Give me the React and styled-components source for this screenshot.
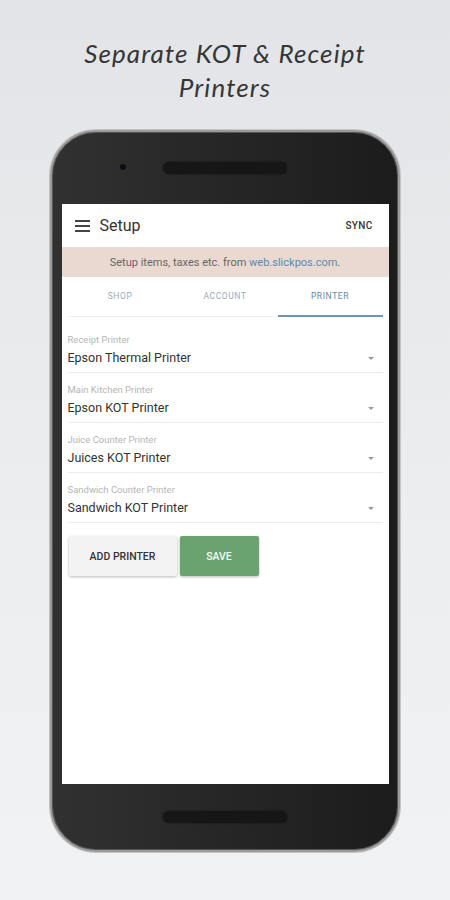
import React from 'react';
import styled, { createGlobalStyle } from 'styled-components';

const GlobalStyle = createGlobalStyle`
  html, body {
    margin: 0;
    padding: 0;
  }
  body {
    background: linear-gradient(180deg, #e2e4e7 0%, #eceef0 60%, #f1f2f4 100%);
    font-family: Roboto, 'Liberation Sans', sans-serif;
    min-height: 900px;
  }
`;

const printers = [
  { label: 'Receipt Printer', value: 'Epson Thermal Printer' },
  { label: 'Main Kitchen Printer', value: 'Epson KOT Printer' },
  { label: 'Juice Counter Printer', value: 'Juices KOT Printer' },
  { label: 'Sandwich Counter Printer', value: 'Sandwich KOT Printer' },
];

const tabs = ['Shop', 'Account', 'Printer'];

const App = () => (
  <>
    <GlobalStyle />
    <Page>
      <Title>
        Separate KOT &amp; Receipt
        <br />
        Printers
      </Title>
      <Phone>
        <TopBezel>
          <Camera />
          <Speaker />
        </TopBezel>
        <Screen>
          <AppBar>
            <Menu>
              <span />
              <span />
              <span />
            </Menu>
            <BarTitle>Setup</BarTitle>
            <Sync>SYNC</Sync>
          </AppBar>
          <Banner>
            Setup items, taxes etc. from <Link>web.slickpos.com</Link>.
          </Banner>
          <Tabs>
            {tabs.map((t) => (
              <Tab key={t} active={t === 'Printer'}>
                {t}
              </Tab>
            ))}
          </Tabs>
          <Fields>
            {printers.map((p) => (
              <Field key={p.label}>
                <Label>{p.label}</Label>
                <ValueRow>
                  <Value>{p.value}</Value>
                  <Caret />
                </ValueRow>
              </Field>
            ))}
          </Fields>
          <Actions>
            <Button>ADD PRINTER</Button>
            <Button primary>SAVE</Button>
          </Actions>
        </Screen>
        <BottomBezel>
          <Speaker />
        </BottomBezel>
      </Phone>
    </Page>
  </>
);

export default App;

const Page = styled.div`
  width: 450px;
  height: 900px;
  display: flex;
  flex-direction: column;
  align-items: center;
  overflow: hidden;
`;

const Title = styled.h1`
  margin: 36px 0 0;
  font-family: Lato, 'Open Sans', sans-serif;
  font-style: italic;
  font-weight: 400;
  font-size: 26px;
  line-height: 34px;
  letter-spacing: 1.1px;
  color: #363636;
  text-align: center;
`;

const Phone = styled.div`
  margin-top: 26px;
  width: 346px;
  height: 718px;
  border: 2px solid #9a9a9a;
  border-radius: 46px;
  background: linear-gradient(90deg, #313131 0%, #272727 45%, #1c1c1c 100%);
  box-shadow: inset 0 0 0 1px #555, 0 0 0 1px #c4c4c4;
  display: flex;
  flex-direction: column;
  align-items: center;
`;

const TopBezel = styled.div`
  height: 72px;
  width: 100%;
  display: flex;
  align-items: center;
  justify-content: center;
  position: relative;
`;

const Camera = styled.span`
  position: absolute;
  left: 68px;
  top: 32px;
  width: 6px;
  height: 6px;
  border-radius: 50%;
  background: #0c0c14;
`;

const Speaker = styled.span`
  width: 124px;
  height: 12px;
  border-radius: 6px;
  background: #161616;
  box-shadow: 0 0 2px rgba(0, 0, 0, 0.6);
`;

const Screen = styled.div`
  width: 327px;
  height: 580px;
  background: #fff;
  display: flex;
  flex-direction: column;
`;

const BottomBezel = styled.div`
  flex: 1;
  width: 100%;
  display: flex;
  align-items: center;
  justify-content: center;
`;

const AppBar = styled.div`
  height: 43px;
  display: flex;
  align-items: center;
  padding: 0 16px 0 13px;
`;

const Menu = styled.div`
  width: 15px;
  display: flex;
  flex-direction: column;
  gap: 3px;
  span {
    display: block;
    height: 2px;
    background: #444;
  }
`;

const BarTitle = styled.div`
  margin-left: 10px;
  font-size: 16px;
  color: #333;
  flex: 1;
`;

const Sync = styled.div`
  font-size: 10px;
  font-weight: 500;
  color: #333;
  letter-spacing: 0.3px;
`;

const Banner = styled.div`
  height: 30px;
  background: #ead9d1;
  display: flex;
  align-items: center;
  justify-content: center;
  font-size: 11px;
  color: #666;
  white-space: pre;
`;

const Link = styled.span`
  color: #5b88b3;
`;

const Tabs = styled.div`
  margin: 0 6px;
  height: 39px;
  display: grid;
  grid-template-columns: repeat(3, 1fr);
  border-bottom: 1px solid #eeeeee;
`;

const Tab = styled.div`
  display: flex;
  align-items: center;
  justify-content: center;
  font-size: 8.5px;
  text-transform: uppercase;
  letter-spacing: 0.6px;
  color: ${({ active }) => (active ? '#5f87a8' : '#9aabb8')};
  border-bottom: 2px solid ${({ active }) => (active ? '#6d95b5' : 'transparent')};
  margin-bottom: -1px;
`;

const Fields = styled.div`
  padding: 6px 6px 0;
`;

const Field = styled.div`
  padding: 12px 0 6px;
  border-bottom: 1px solid #ececec;
  height: 31px;
`;

const Label = styled.div`
  font-size: 9.5px;
  line-height: 10px;
  color: #b6b6b6;
`;

const ValueRow = styled.div`
  margin-top: 5px;
  display: flex;
  align-items: center;
  justify-content: space-between;
  padding-right: 9px;
`;

const Value = styled.div`
  font-size: 12.5px;
  line-height: 16px;
  color: #333;
`;

const Caret = styled.span`
  width: 0;
  height: 0;
  border-left: 3.5px solid transparent;
  border-right: 3.5px solid transparent;
  border-top: 3.5px solid #999;
`;

const Actions = styled.div`
  display: flex;
  gap: 3px;
  padding: 13px 7px 0;
`;

const Button = styled.button`
  height: 40px;
  min-width: ${({ primary }) => (primary ? '79px' : '108px')};
  padding: 0 12px;
  border: none;
  border-radius: 2px;
  font-family: Roboto, 'Liberation Sans', sans-serif;
  font-size: 10.5px;
  font-weight: 500;
  color: ${({ primary }) => (primary ? '#f4fbf4' : '#333')};
  background: ${({ primary }) => (primary ? '#6aa36f' : '#f3f3f3')};
  box-shadow: 0 1px 3px rgba(0, 0, 0, 0.28);
`;
